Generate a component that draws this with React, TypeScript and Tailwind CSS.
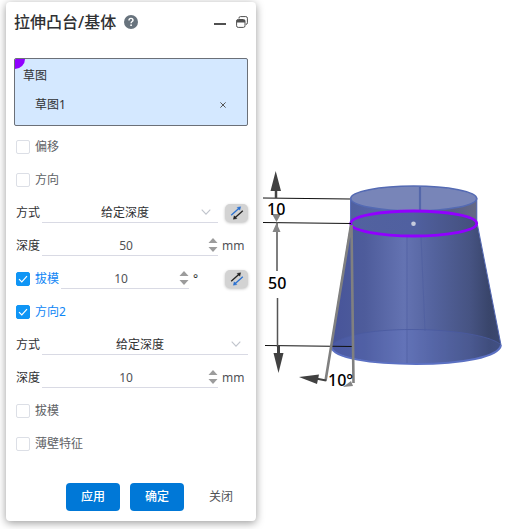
import { useState, type ReactNode } from "react";

function Row({ children }: { children: ReactNode }) {
  return <div className="flex h-[33px] items-center pl-0.5">{children}</div>;
}

type CheckProps = {
  label: string;
  checked: boolean;
  onChange: (value: boolean) => void;
};

function Check({ label, checked, onChange }: CheckProps) {
  return (
    <label className="flex shrink-0 items-center gap-[5px]">
      <span className="relative flex">
        <input
          type="checkbox"
          checked={checked}
          onChange={(e) => onChange(e.target.checked)}
          className="size-3.5 appearance-none rounded-xs border border-[#dcdfe6] bg-white checked:border-[#0f95f5] checked:bg-[#0f95f5]"
        />
        {checked && (
          <svg viewBox="0 0 14 14" className="pointer-events-none absolute inset-0 size-3.5" fill="none" stroke="#fff">
            <path d="M3 7.2 5.8 10 11 4.2" strokeWidth="1.2" />
          </svg>
        )}
      </span>
      <span className={checked ? "text-[#0f86f5]" : "text-[#606266]"}>{label}</span>
    </label>
  );
}

function MethodSelect({ id }: { id: string }) {
  return (
    <div className="relative ml-0.5 min-w-0 flex-1 border-b border-[#d9dae4]">
      <select
        id={id}
        className="block h-5 w-full appearance-none bg-transparent pt-px pr-2.5 text-center [text-align-last:center] outline-none"
      >
        <option>给定深度</option>
      </select>
      <svg viewBox="0 0 10 6" className="pointer-events-none absolute top-[7px] right-[7px] h-1.5 w-2.5" fill="none" stroke="#c0c4cc">
        <path d="M.7.7 5 5.2 9.3.7" strokeWidth="1.1" />
      </svg>
    </div>
  );
}

function NumberField({ id, label, initial }: { id: string; label: string; initial: number }) {
  const [value, setValue] = useState(initial);
  return (
    <div className="ml-0.5 flex min-w-0 flex-1 items-center border-b border-[#d9dae4]">
      <input
        id={id}
        aria-label={label}
        value={value}
        onChange={(e) => setValue(Number(e.target.value) || 0)}
        className="h-5 w-full min-w-0 bg-transparent pl-0.5 text-center text-[#505256] outline-none"
      />
      <span className="flex w-2.5 shrink-0 flex-col gap-1">
        <button type="button" aria-label="+" onClick={() => setValue(value + 1)}>
          <svg viewBox="0 0 10 5" className="block h-[5px] w-2.5" fill="#9c9c9c">
            <path d="M5 0 9.5 5H.5Z" />
          </svg>
        </button>
        <button type="button" aria-label="-" onClick={() => setValue(value - 1)}>
          <svg viewBox="0 0 10 5" className="block h-[5px] w-2.5" fill="#9c9c9c">
            <path d="M5 5 9.5 0H.5Z" />
          </svg>
        </button>
      </span>
    </div>
  );
}

function FlipButton({ down = false }: { down?: boolean }) {
  return (
    <button
      type="button"
      aria-label="反向"
      className="flex h-[18px] w-[23px] items-center justify-center rounded-[5px] bg-[#d3d3d3] shadow-[0_1px_3px_rgba(0,0,0,0.25)]"
    >
      <svg viewBox="0 0 14 14" className="size-3.5">
        <path d="M1.2 9.2 9 2.2" stroke={down ? "#222" : "#2b71d0"} strokeWidth="1.3" />
        <path d="M10.6.8 9.8 4.2 7.200 1.500Z" fill={down ? "#222" : "#2b71d0"} stroke={down ? "#222" : "#2b71d0"} strokeWidth=".5" />
        <path d="M12.800 4.800 5 11.800" stroke={down ? "#2b71d0" : "#222"} strokeWidth="1.3" />
        <path d="M3.400 13.200 4.200 9.800 6.800 12.500Z" fill={down ? "#2b71d0" : "#222"} stroke={down ? "#2b71d0" : "#222"} strokeWidth=".5" />
      </svg>
    </button>
  );
}

function ExtrudePanel() {
  const [offset, setOffset] = useState(false);
  const [direction, setDirection] = useState(false);
  const [draft, setDraft] = useState(true);
  const [direction2, setDirection2] = useState(true);
  const [draft2, setDraft2] = useState(false);
  const [thin, setThin] = useState(false);

  return (
    <form
      onSubmit={(e) => e.preventDefault()}
      className="relative z-10 mt-0.5 ml-1.5 w-[250px] shrink-0 self-start rounded-sm bg-white px-2 pb-2.5 text-xs text-[#303133] shadow-[0_2px_8px_rgba(0,0,0,0.4)]"
    >
      <header className="flex h-10 items-center">
        <h1 className="text-base font-medium">拉伸凸台/基体</h1>
        <button type="button" aria-label="帮助" className="ml-2">
          <svg viewBox="0 0 14 14" className="size-3.5">
            <circle cx="7" cy="7" r="7" fill="#68737d" />
            <path d="M5 5.4C5 4.2 5.8 3.4 7 3.4s2 .8 2 1.8C9 6.6 7.1 6.5 7.1 8.2" fill="none" stroke="#fff" strokeWidth="1.4" />
            <circle cx="7.1" cy="10.2" r=".9" fill="#fff" />
          </svg>
        </button>
        <button type="button" aria-label="最小化" className="ml-auto">
          <svg viewBox="0 0 12 12" className="size-3">
            <path d="M0 8h12" stroke="#505050" strokeWidth="2" />
          </svg>
        </button>
        <button type="button" aria-label="还原" className="ml-2.5">
          <svg viewBox="0 0 12 12" className="size-3" fill="none" stroke="#505050">
            <path d="M3 2.600V2Q3 .6 4.400.6h5.400q1.600 0 1.600 1.600v4.600q0 1.600-1.600 1.600" />
            <rect x=".6" y="3.500" width="8.400" height="7.900" rx="1.600" />
            <path d="M.6 5.200h8.400" strokeWidth="2.600" />
          </svg>
        </button>
      </header>

      <section className="relative mt-4 mb-1 flex h-[68px] flex-col overflow-hidden rounded-xs border border-[#6b7078] bg-[#d4e8ff] px-2">
        <span className="absolute top-0 left-0 size-2.5 rounded-br-full bg-[#9000ff]" />
        <h2 className="mt-2 leading-[18px]">草图</h2>
        <div className="mt-[11px] flex items-center justify-between pr-[13px] pl-3 leading-[18px]">
          <span>草图1</span>
          <button type="button" aria-label="移除草图1">
            <svg viewBox="0 0 6 6" className="size-1.5" stroke="#555">
              <path d="M.4.4 5.6 5.6M5.6.4.4 5.6" />
            </svg>
          </button>
        </div>
      </section>

      <Row>
        <Check label="偏移" checked={offset} onChange={setOffset} />
      </Row>
      <Row>
        <Check label="方向" checked={direction} onChange={setDirection} />
      </Row>
      <Row>
        <label htmlFor="method">方式</label>
        <MethodSelect id="method" />
        <div className="flex w-[30px] justify-end">
          <FlipButton />
        </div>
      </Row>
      <Row>
        <label htmlFor="depth">深度</label>
        <NumberField id="depth" label="深度" initial={50} />
        <span className="w-[30px] pl-1 text-[#505256]">mm</span>
      </Row>
      <Row>
        <Check label="拔模" checked={draft} onChange={setDraft} />
        <NumberField id="angle" label="拔模角度" initial={10} />
        <div className="flex w-[59px] items-center justify-between pl-1">
          <span>°</span>
          <FlipButton down />
        </div>
      </Row>
      <Row>
        <Check label="方向2" checked={direction2} onChange={setDirection2} />
      </Row>
      <Row>
        <label htmlFor="method2">方式</label>
        <MethodSelect id="method2" />
      </Row>
      <Row>
        <label htmlFor="depth2">深度</label>
        <NumberField id="depth2" label="深度" initial={10} />
        <span className="w-[30px] pl-1 text-[#505256]">mm</span>
      </Row>
      <Row>
        <Check label="拔模" checked={draft2} onChange={setDraft2} />
      </Row>
      <Row>
        <Check label="薄壁特征" checked={thin} onChange={setThin} />
      </Row>

      <footer className="mt-[23px] flex justify-end gap-2.5">
        <button type="submit" className="h-7 w-[54px] rounded-sm bg-[#0078d7] font-medium text-white">应用</button>
        <button type="submit" className="h-7 w-[54px] rounded-sm bg-[#0078d7] font-medium text-white">确定</button>
        <button type="button" className="h-7 w-[54px] text-[#505256]">关闭</button>
      </footer>
    </form>
  );
}

function Viewport() {
  return (
    <svg viewBox="256 0 249 529" className="min-w-0 flex-1 self-start">
      <defs>
        <linearGradient id="body" x1="331" x2="501" y1="0" y2="0" gradientUnits="userSpaceOnUse">
          <stop offset="0" stopColor="#47549a" />
          <stop offset=".2" stopColor="#4e5c9b" />
          <stop offset=".43" stopColor="#6473b2" />
          <stop offset=".6" stopColor="#54639e" />
          <stop offset=".82" stopColor="#465382" />
          <stop offset=".93" stopColor="#39456b" />
          <stop offset="1" stopColor="#3b4871" />
        </linearGradient>
        <linearGradient id="band" x1="350" x2="477" y1="0" y2="0" gradientUnits="userSpaceOnUse">
          <stop offset="0" stopColor="#50609f" />
          <stop offset=".45" stopColor="#5b6bae" />
          <stop offset=".8" stopColor="#575f87" />
          <stop offset="1" stopColor="#656985" />
        </linearGradient>
        <linearGradient id="sketch" x1="350" x2="477" y1="0" y2="0" gradientUnits="userSpaceOnUse">
          <stop offset="0" stopColor="#52629f" />
          <stop offset=".5" stopColor="#5060a0" />
          <stop offset="1" stopColor="#444f7b" />
        </linearGradient>
      </defs>

      {/* tapered body */}
      <path d="M350.500 223 330.500 347C333 357 370 364 416 364S499 357 501 345L477 223Z" fill="url(#body)" />
      <path d="M331 347C336 336 370 329.500 412 329.500S490 336 500 344C499 357 462 364 416 364S334 358 331 347Z" fill="#6075d0" opacity=".18" />
      <path d="M331 347C334 358 370 364 416 364S499 357 501 345" fill="none" stroke="#5b70c2" strokeWidth="2" />
      <path d="M331 347C336 336 370 329.500 412 329.500S490 336 500 344" fill="none" stroke="#4a5aa0" opacity=".8" />
      <path d="M477.500 225 501 345" stroke="#5267b3" />
      <path d="M407 236V363M421 236 425 331" stroke="#4e5ea0" opacity=".6" />

      {/* straight section above the sketch plane */}
      <path d="M350.500 198V223.500A63.500 12.500 0 0 0 477 223.500V198Z" fill="url(#band)" />
      <ellipse cx="413.7" cy="223.5" rx="63" ry="12.5" fill="url(#sketch)" />
      <ellipse cx="413.7" cy="198.5" rx="63" ry="12.5" fill="#7885b8" stroke="#546ab3" strokeWidth="1.6" />
      <path d="M420 187V210" stroke="#5467aa" strokeWidth="2.2" />
      <path d="M350.500 198V223M476.800 198V223" stroke="#5a6fb8" />
      <ellipse cx="413.7" cy="223.5" rx="63" ry="12.5" fill="none" stroke="#9100ff" strokeWidth="2.8" />
      <circle cx="413.5" cy="223.7" r="2.3" fill="#c6cbdd" />

      {/* dimension lines */}
      <g stroke="#111" strokeWidth="1.2">
        <path d="M263 198 350 199M263 222.500 351 223.500M265 345.500 353 346.500" />
        <path d="M277 222V271M277.500 298V347" stroke="#555" strokeWidth="1.5" />
        <path d="M276 190V198" strokeWidth="2.5" stroke="#444" />
      </g>
      <path d="M275.700 171 281 191H270.500ZM278.500 373 273.500 353H283.500Z" fill="#414141" />
      <path d="M276.500 222 272 214H281ZM276.500 223 272.500 232H280.500Z" fill="#858585" />
      <path d="M278.500 346V354" stroke="#414141" strokeWidth="3" />

      {/* draft angle */}
      <path d="M351 225 325.500 381M351.500 225 353.500 383" fill="none" stroke="#808080" strokeWidth="2.6" />
      <path d="M316 378.500 326 380.500" stroke="#414141" strokeWidth="2" />
      <path d="M299 377 319 374.500 317 384Z" fill="#414141" />
      <path d="M343 387 351 381 353 386Z" fill="#858585" />

      <g fill="#000" fontSize="16" fontWeight="500">
        <text x="267" y="215">10</text>
        <text x="268" y="289">50</text>
        <text x="328" y="386">10°</text>
      </g>
    </svg>
  );
}

export default function App() {
  return (
    <main className="flex min-h-screen overflow-hidden bg-white font-['Noto_Sans','Noto_Sans_CJK_SC',sans-serif]">
      <ExtrudePanel />
      <Viewport />
    </main>
  );
}
